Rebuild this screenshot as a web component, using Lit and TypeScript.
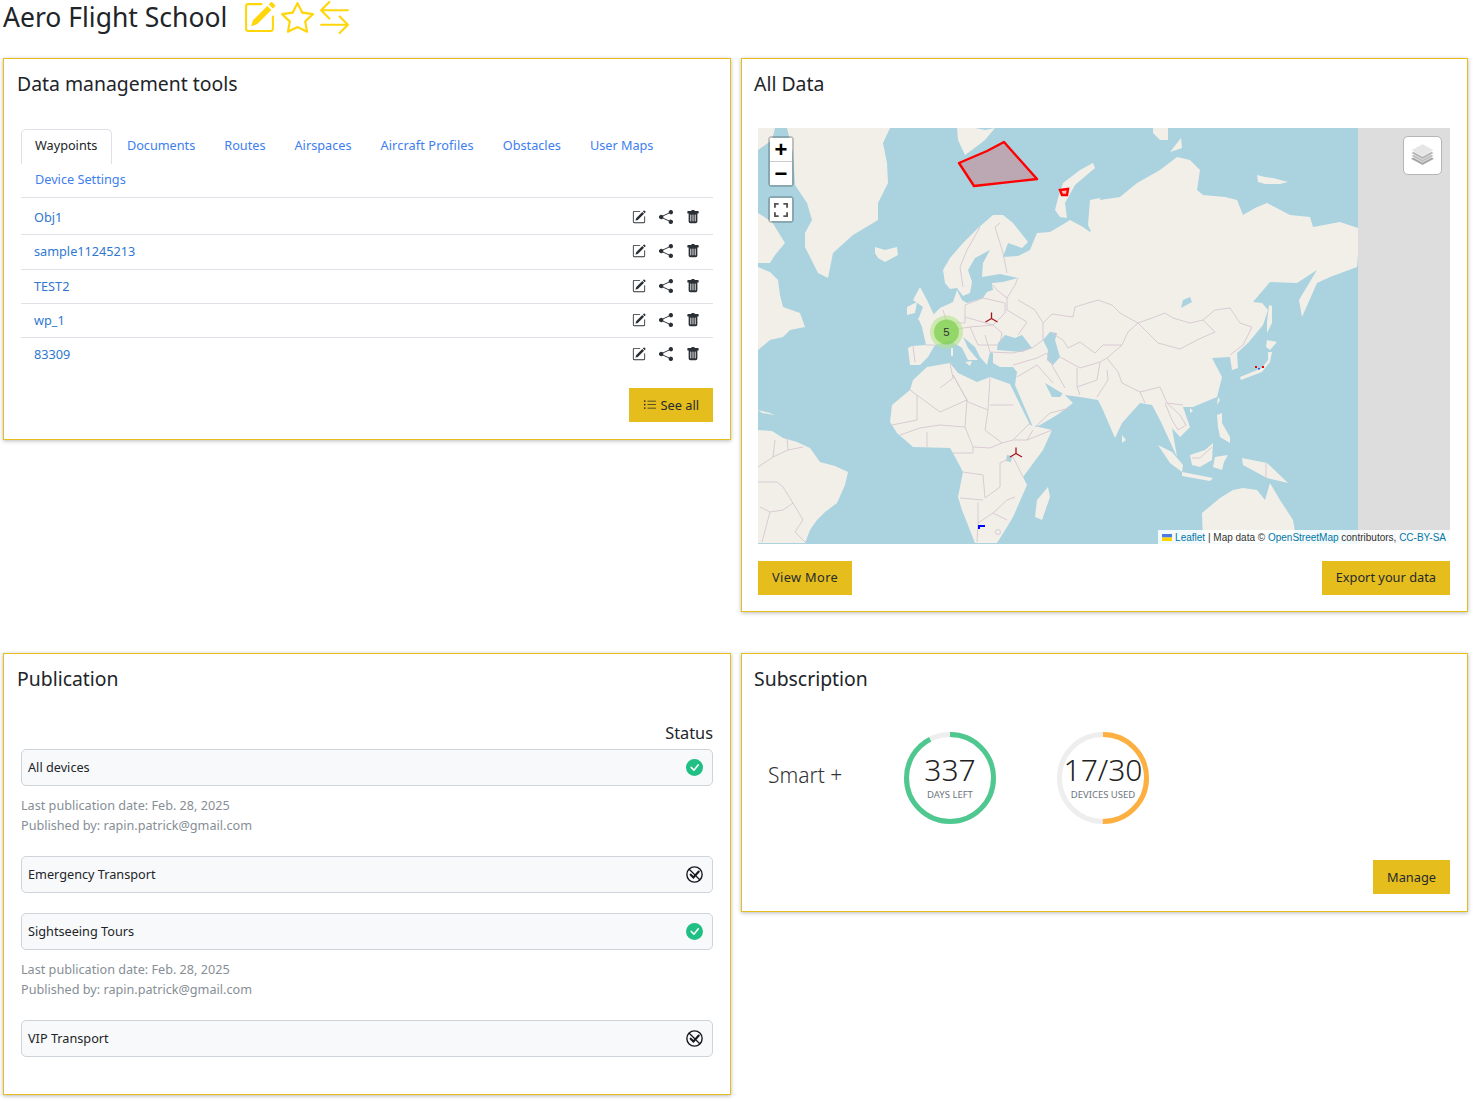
import { LitElement, css, html, svg } from "lit";
import { customElement } from "lit/decorators.js";

const LAND = [
  // greenland
  "787,128 890,128 883,143 887,163 888,183 878,203 878,220 853,235 833,253 828,278 818,273 805,247 805,233 812,220 807,203 795,185 793,153",
  // canada, arctic and east coast
  "758,128 775,128 772,140 758,150",
  "758,213 772,222 785,243 775,255 770,263 758,263",
  "758,267 770,272 778,280 780,295 783,307 800,313 805,327 790,330 783,337 770,340 758,350",
  // south america
  "758,430 772,431 783,438 797,442 810,448 820,462 835,466 848,472 845,485 837,503 825,512 817,520 810,530 805,543 758,543",
  "758,410 770,413 775,415 762,413",
  // iceland
  "875,247 885,250 897,247 898,255 885,262 878,258 875,253",
  // svalbard, novaya zemlya, arctic russia
  "957,128 975,128 985,130 995,128 985,140 972,150 965,155 958,140",
  "1093,163 1095,168 1075,185 1065,203 1067,218 1060,217 1055,210 1058,198 1063,183 1080,170",
  "1090,200 1100,198 1103,220 1095,240 1088,225",
  "1153,128 1168,128 1168,140 1160,140 1153,133",
  "1170,152 1181,138 1182,148",
  "1257,175 1265,177 1273,178 1288,182 1280,184 1265,184 1258,182",
  // eurasia
  "945,283 943,270 950,258 963,243 978,228 993,215 1003,215 1013,223 1028,242 1022,248 1008,243 1003,257 1018,256 1030,250 1037,233 1050,232 1062,225 1070,220 1083,227 1090,232 1098,222 1100,200 1120,197 1137,183 1160,170 1177,157 1190,160 1200,170 1197,190 1203,195 1225,197 1237,200 1243,215 1255,208 1267,203 1290,215 1310,217 1313,227 1340,222 1358,228 1358,255 1357,267 1330,277 1317,283 1302,317 1299,300 1317,270 1297,283 1270,282 1253,302 1262,303 1268,310 1263,325 1248,343 1237,353 1238,368 1232,370 1230,357 1212,358 1222,377 1217,397 1193,407 1183,407 1190,427 1180,437 1172,428 1177,457 1167,435 1160,420 1152,405 1140,403 1122,423 1115,438 1103,410 1098,400 1080,397 1065,395 1045,383 1052,397 1060,397 1063,393 1073,403 1057,415 1040,425 1033,427 1015,385 1017,372 1013,367 1000,367 993,363 993,353 990,352 987,365 980,357 975,347 963,337 968,348 978,360 975,360 968,360 962,348 950,340 943,343 935,345 932,350 928,357 920,365 910,365 908,348 912,346 926,345 922,327 918,318 933,315 940,308 953,302 957,290 962,300 967,303 983,298 987,292 993,290 992,283 1003,282 1018,278 1000,274 982,277 983,263 990,250 975,258 968,270 972,282 970,293 963,296 957,288 950,289",
  // africa
  "927,367 950,363 958,373 977,382 990,377 1010,384 1030,425 1052,430 1043,450 1023,477 1027,485 1013,517 1007,527 997,543 975,543 962,510 958,497 963,472 953,453 950,448 913,447 897,433 890,422 892,405 910,390 913,380",
  "1048,487 1050,497 1042,520 1035,517 1037,500",
  // uk, mediterranean islands
  "920,287 927,300 935,317 918,320 923,307 913,300",
  "907,307 917,302 915,313 907,315",
  "951,348 953,348 953,356 951,356",
  "965,362 972,361 970,366",
  // japan and east asia islands
  "1268,352 1268,360 1262,368 1240,377 1241,380 1262,372 1270,362 1272,352",
  "1267,340 1277,342 1270,350 1266,347",
  "1269,305 1272,306 1272,323 1267,333 1267,322",
  "1218,397 1220,400 1217,405",
  "1190,408 1193,411 1190,413",
  "1122,435 1126,440 1122,443",
  // south east asia
  "1158,445 1172,452 1183,465 1182,472 1170,463",
  "1182,472 1213,478 1210,481 1182,476",
  "1190,455 1205,450 1213,443 1212,460 1200,467 1192,465",
  "1215,457 1228,455 1224,462 1222,470 1213,467",
  "1217,415 1222,413 1222,423 1230,437 1230,443 1220,437 1218,427",
  "1242,458 1267,463 1288,483 1267,478 1243,465",
  // australia
  "1202,513 1220,498 1233,490 1243,488 1257,490 1265,500 1270,483 1280,500 1293,520 1297,543 1203,543",
];

const WATER = [
  // black sea, caspian
  "998,343 1005,335 1015,338 1022,335 1032,348 1022,352 997,350",
  "1043,340 1050,332 1057,333 1055,340 1060,357 1053,365 1047,360 1048,350",
  // lakes
  "1007,455 1012,456 1011,462 1006,461",
  "1183,300 1190,297 1192,302 1181,308",
];

const BORDERS = [
  // north and west africa
  "950,363 953,378 940,388",
  "910,390 940,412 967,400 953,375",
  "953,375 968,402 988,410 990,378",
  "990,405 1013,405",
  "988,410 985,430 1002,443 1013,440 1030,423",
  "967,400 965,427 973,447 990,448 1002,443",
  "892,425 917,420 917,395",
  "900,435 920,428 940,425 965,427",
  "927,447 927,432",
  // central and southern africa
  "953,453 973,453 973,447",
  "963,472 983,475 985,498 1000,487 1000,463 1013,457 1023,477",
  "960,498 983,500",
  "978,502 978,523 977,542",
  "993,513 1007,500 1015,497",
  "978,523 993,513 1007,520",
  "1027,440 1052,430",
  "1013,440 1027,440 1033,430",
  // south america
  "758,467 773,457 775,440",
  "787,438 788,450 803,447",
  "773,457 788,450",
  "758,482 777,482 783,487 793,503 803,520 795,532 805,542",
  "760,507 770,512 783,510 793,503",
  "770,512 762,542",
  // europe
  "913,346 915,362",
  "926,345 935,345",
  "943,310 947,323 965,323 965,305",
  "965,305 983,298 1005,303 1005,313 993,325 965,317",
  "950,330 970,327 993,325 1002,333 1000,343",
  "970,327 978,345 998,345",
  "985,335 990,352",
  "993,285 997,290 1007,298 1007,310 1027,322 1018,335",
  "1018,278 1015,285 1007,298",
  "980,227 967,250 960,267 963,287",
  "1000,223 995,227 1003,253 1007,273",
  // turkey, middle east
  "990,352 1013,353 1032,348",
  "1013,365 1037,358 1047,353",
  "1047,353 1053,367 1065,388",
  "1017,377 1037,365 1053,383",
  "1035,427 1050,413 1070,408",
  "1032,348 1043,340",
  // central asia
  "1043,323 1052,314 1073,317 1075,307 1098,300 1112,305 1120,313 1138,323",
  "1018,300 1035,310 1043,323 1043,340",
  "1138,323 1128,332 1122,345 1103,345 1095,353 1080,342 1068,348 1063,340 1050,332",
  "1138,323 1152,318 1165,313 1173,318 1190,323 1203,320 1215,332 1197,340 1180,349 1158,343 1147,332 1138,323",
  "1203,320 1215,310 1230,308 1240,323 1252,327 1243,345 1230,355",
  "1122,345 1107,358 1118,372 1122,383 1140,392 1160,387 1167,403 1183,405",
  "1060,357 1080,368 1100,362 1107,358",
  "1077,368 1077,387 1080,395",
  "1100,362 1097,380 1077,387",
  "1107,370 1108,380 1097,397",
  "1165,403 1172,420 1178,430",
  "1167,403 1180,415 1186,425 1178,430",
  "1140,392 1145,403",
  // new guinea, borneo
  "1266,463 1266,479",
  "1192,458 1200,458 1212,447",
];

const cardIcon = (paths: unknown, cls: string) => html`<svg class=${cls} viewBox="0 0 16 16" fill="currentColor">${paths}</svg>`;

const pencil = svg`<path d="M15.502 1.94a.5.5 0 0 1 0 .706L14.459 3.69l-2-2L13.502.646a.5.5 0 0 1 .707 0l1.293 1.293zm-1.75 2.456-2-2L4.939 9.21a.5.5 0 0 0-.121.196l-.805 2.414a.25.25 0 0 0 .316.316l2.414-.805a.5.5 0 0 0 .196-.12l6.813-6.814z"/><path fill-rule="evenodd" d="M1 13.5A1.5 1.5 0 0 0 2.5 15h11a1.5 1.5 0 0 0 1.5-1.5v-6a.5.5 0 0 0-1 0v6a.5.5 0 0 1-.5.5h-11a.5.5 0 0 1-.5-.5v-11a.5.5 0 0 1 .5-.5H9a.5.5 0 0 0 0-1H2.5A1.5 1.5 0 0 0 1 2.5v11z"/>`;
const star = svg`<path d="M2.866 14.85c-.078.444.36.791.746.593l4.39-2.256 4.389 2.256c.386.198.824-.149.746-.592l-.83-4.73 3.522-3.356c.33-.314.16-.888-.282-.95l-4.898-.696L8.465.792a.513.513 0 0 0-.927 0L5.354 5.12l-4.898.696c-.441.062-.612.636-.283.95l3.523 3.356-.83 4.73zm4.905-2.767-3.686 1.894.694-3.957a.565.565 0 0 0-.163-.505L1.71 6.745l4.052-.576a.525.525 0 0 0 .393-.288L8 2.223l1.847 3.658a.525.525 0 0 0 .393.288l4.052.575-2.906 2.77a.565.565 0 0 0-.163.506l.694 3.957-3.686-1.894a.503.503 0 0 0-.461 0z"/>`;
const arrows = svg`<path fill-rule="evenodd" d="M1 11.5a.5.5 0 0 0 .5.5h11.793l-3.147 3.146a.5.5 0 0 0 .708.708l4-4a.5.5 0 0 0 0-.708l-4-4a.5.5 0 0 0-.708.708L13.293 11H1.5a.5.5 0 0 0-.5.5zm14-7a.5.5 0 0 1-.5.5H2.707l3.147 3.146a.5.5 0 1 1-.708.708l-4-4a.5.5 0 0 1 0-.708l4-4a.5.5 0 1 1 .708.708L2.707 4H14.5a.5.5 0 0 1 .5.5z"/>`;
const share = svg`<path d="M11 2.5a2.5 2.5 0 1 1 .603 1.628l-6.718 3.12a2.499 2.499 0 0 1 0 1.504l6.718 3.12a2.5 2.5 0 1 1-.488.876l-6.718-3.12a2.5 2.5 0 1 1 0-3.256l6.718-3.12A2.5 2.5 0 0 1 11 2.5z"/>`;
const trash = svg`<path d="M2.5 1a1 1 0 0 0-1 1v1a1 1 0 0 0 1 1H3v9a2 2 0 0 0 2 2h6a2 2 0 0 0 2-2V4h.5a1 1 0 0 0 1-1V2a1 1 0 0 0-1-1H10a1 1 0 0 0-1-1H7a1 1 0 0 0-1 1H2.5zm3 4a.5.5 0 0 1 .5.5v7a.5.5 0 0 1-1 0v-7a.5.5 0 0 1 .5-.5zM8 5a.5.5 0 0 1 .5.5v7a.5.5 0 0 1-1 0v-7A.5.5 0 0 1 8 5zm3 .5v7a.5.5 0 0 1-1 0v-7a.5.5 0 0 1 1 0z"/>`;
const list = svg`<path fill-rule="evenodd" d="M5 11.5a.5.5 0 0 1 .5-.5h9a.5.5 0 0 1 0 1h-9a.5.5 0 0 1-.5-.5zm0-4a.5.5 0 0 1 .5-.5h9a.5.5 0 0 1 0 1h-9a.5.5 0 0 1-.5-.5zm0-4a.5.5 0 0 1 .5-.5h9a.5.5 0 0 1 0 1h-9a.5.5 0 0 1-.5-.5zm-3 1a1 1 0 1 0 0-2 1 1 0 0 0 0 2zm0 4a1 1 0 1 0 0-2 1 1 0 0 0 0 2zm0 4a1 1 0 1 0 0-2 1 1 0 0 0 0 2z"/>`;
const checkFill = svg`<path d="M16 8A8 8 0 1 1 0 8a8 8 0 0 1 16 0zm-3.97-3.03a.75.75 0 0 0-1.08.022L7.477 9.417 5.384 7.323a.75.75 0 0 0-1.06 1.06L6.97 11.03a.75.75 0 0 0 1.079-.02l3.992-4.99a.75.75 0 0 0-.01-1.05z"/>`;
const unpublished = svg`<circle cx="8" cy="8" r="7.2" fill="none" stroke="currentColor" stroke-width="1.3"/><path d="M2.8 2.8 13.2 13.2" stroke="currentColor" stroke-width="1.2"/><path d="M4.4 8.2 7 10.8 12 5.2" fill="none" stroke="currentColor" stroke-width="2" stroke-linecap="round"/>`;

const blade = (x: number, y: number) => svg`<g transform="translate(${x} ${y})" fill="none" stroke="#a3151c" stroke-width="1.3"><path d="M0 0V-6M0 0 6 3.5M0 0-6 3.5"/></g>`;

@customElement("app-root")
export class AppRoot extends LitElement {
  static styles = css`
    :host {
      display: block;
      font-family: "Noto Sans", "Open Sans", sans-serif;
      color: #212529;
      font-size: 13px;
      background: #fff;
      height: 1103px;
      overflow: hidden;
    }
    .top {
      height: 58px;
      display: flex;
      align-items: flex-start;
      padding-left: 3px;
    }
    h1 {
      margin: 0;
      font-size: 26.5px;
      font-weight: 400;
      line-height: 34px;
      width: 240px;
    }
    .top-icons {
      display: flex;
      color: #ffd60a;
      gap: 4.5px;
    }
    .top-icons svg {
      width: 33px;
      height: 33px;
      margin-top: 1px;
    }
    .grid {
      display: grid;
      grid-template-columns: 728px 727px;
      column-gap: 10px;
      row-gap: 41px;
      padding-left: 3px;
      align-items: start;
    }
    .card {
      box-sizing: border-box;
      border: 1px solid #e5bd1d;
      box-shadow: 0 1px 4px rgba(0, 0, 0, 0.28);
      padding: 12px 17px 17px 13px;
      background: #fff;
    }
    .card h2 {
      margin: 0;
      font-size: 19.4px;
      font-weight: 400;
      line-height: 26px;
    }
    .map-card h2,
    .sub h2 {
      margin-left: -1px;
    }
    .data {
      height: 382px;
    }
    .body {
      margin: 32px 0 0 4px;
    }
    .tabs {
      display: flex;
      flex-wrap: wrap;
      border-bottom: 1px solid #dee2e6;
    }
    .tab {
      height: 34px;
      line-height: 32px;
      padding: 0 14px;
      color: #3d7ef0;
      font-size: 12.7px;
      box-sizing: border-box;
      margin-right: 1px;
    }
    .tab.active {
      color: #212529;
      border: 1px solid #dee2e6;
      border-bottom: none;
      border-radius: 5px 5px 0 0;
      line-height: 30px;
      padding: 0 13.5px 0 13px;
      background: #fff;
      height: 35px;
      margin-bottom: -1px;
    }
    .tab.long {
      letter-spacing: 0.12px;
    }
    .tab-break {
      flex-basis: 100%;
      height: 0;
    }
    .row {
      display: flex;
      align-items: center;
      height: 34px;
      border-bottom: 1px solid #dee2e6;
      padding: 0 13px 1px 13px;
      box-sizing: border-box;
      color: #2f78d0;
      font-size: 12.7px;
    }
    .row.first {
      height: 37px;
      padding-top: 2px;
    }
    .row.second {
      height: 35px;
      padding-bottom: 2px;
    }
    .row.last {
      border-bottom: none;
      padding-bottom: 2px;
    }
    .row span {
      flex: 1;
    }
    .row svg {
      width: 14px;
      height: 14px;
      color: #2b3036;
      margin-left: 13px;
    }
    .row svg.ed {
      margin-left: 0;
    }
    .actions {
      display: flex;
      justify-content: space-between;
    }
    .actions.end {
      justify-content: flex-end;
    }
    .btn {
      box-sizing: border-box;
      background: #e5bd1d;
      color: #262a2e;
      height: 34px;
      padding: 0 14px 2px;
      font-size: 12.8px;
      display: flex;
      align-items: center;
      gap: 3px;
    }
    .btn.wide {
      letter-spacing: 0.35px;
    }
    .btn.low {
      padding-bottom: 0;
    }
    .btn svg {
      width: 14px;
      height: 14px;
    }
    .see {
      margin-top: 16px;
    }
    .map-card {
      height: 554px;
    }
    .map {
      position: relative;
      margin: 31px 0 0 3px;
      width: 692px;
      height: 416px;
      overflow: hidden;
      background: #ddd;
      font-family: "Liberation Sans", Arial, sans-serif;
    }
    .map > svg {
      display: block;
      width: 692px;
      height: 416px;
    }
    .ctl {
      position: absolute;
      left: 10px;
      border: 2px solid rgba(0, 0, 0, 0.2);
      border-radius: 4px;
      background-clip: padding-box;
      width: 22px;
    }
    .ctl div {
      background: #fff;
      height: 23px;
      display: flex;
      align-items: center;
      justify-content: center;
      color: #000;
      font: 700 22px "Liberation Sans", sans-serif;
    }
    .ctl div + div {
      border-top: 1px solid #ccc;
    }
    .ctl svg {
      width: 14px;
      height: 14px;
    }
    .ctl-zoom {
      top: 8px;
    }
    .ctl-full {
      top: 68px;
    }
    .layers {
      position: absolute;
      right: 8px;
      top: 8px;
      box-sizing: border-box;
      width: 39px;
      height: 39px;
      background: #fff;
      border: 1px solid #b5b5b5;
      border-radius: 5px;
      display: flex;
      align-items: center;
      justify-content: center;
    }
    .layers svg {
      width: 25px;
      height: 25px;
    }
    .attr {
      position: absolute;
      right: 0;
      bottom: 0;
      height: 14px;
      line-height: 15px;
      padding: 0 4px;
      background: rgba(255, 255, 255, 0.85);
      color: #333;
      font-size: 10px;
      white-space: nowrap;
      display: flex;
      align-items: center;
      gap: 3px;
    }
    .attr b {
      font-weight: 400;
      color: #0078a8;
    }
    .attr svg {
      width: 10px;
      height: 7px;
    }
    .map-actions {
      margin: 17px 0 0 3px;
    }
    .status {
      margin: 31px 0 0;
      text-align: right;
      font-size: 16.3px;
      line-height: 21px;
      padding-bottom: 5px;
    }
    .pub {
      margin-left: 4px;
      height: 400px;
    }
    .pub-card {
      height: 442px;
    }
    .group {
      box-sizing: border-box;
      height: 37px;
      display: flex;
      align-items: center;
      justify-content: space-between;
      background: #f8f9fa;
      border: 1px solid #ced4da;
      border-radius: 5px;
      padding: 0 9px 2px 6px;
      color: #212529;
      font-size: 12.7px;
    }
    .group svg {
      width: 17px;
      height: 17px;
      margin-top: 2px;
    }
    .group .ok {
      color: #20bf83;
    }
    .group .no {
      color: #16191c;
    }
    .meta {
      color: #868e96;
      font-size: 12.65px;
      line-height: 20px;
      margin-top: 9px;
      padding-bottom: 1px;
    }
    .gap-a {
      margin-top: 20px;
    }
    .sub {
      height: 259px;
    }
    .sub-row {
      display: flex;
      margin: 40px 0 0 13px;
      height: 92px;
      align-items: center;
    }
    .plan {
      font-size: 21px;
      font-weight: 300;
      width: 136px;
      margin-top: -6px;
      color: #333;
    }
    .ring {
      position: relative;
      width: 92px;
      height: 92px;
      margin-right: 61px;
      text-align: center;
    }
    .ring svg {
      display: block;
      width: 92px;
      height: 92px;
    }
    .ring .val {
      position: absolute;
      left: -5px;
      right: -5px;
      top: 21px;
      font-size: 30px;
      line-height: 34px;
      font-weight: 300;
      color: #222;
    }
    .ring .lab {
      position: absolute;
      left: -5px;
      right: -5px;
      top: 56px;
      font-size: 9.5px;
      line-height: 13px;
      color: #6c757d;
    }
    .sub .actions {
      margin-top: 36px;
    }
  `;

  private ring(color: string, pct: number, val: string, lab: string) {
    const c = 2 * Math.PI * 43.5;
    return html`<div class="ring">
      <svg viewBox="0 0 92 92">
        <circle cx="46" cy="46" r="43.5" fill="none" stroke="#eee" stroke-width="5" />
        <circle
          cx="46"
          cy="46"
          r="43.5"
          fill="none"
          stroke=${color}
          stroke-width="5"
          stroke-dasharray="${(c * pct) / 100} ${c}"
          transform="rotate(-90 46 46)"
        />
      </svg>
      <div class="val">${val}</div>
      <div class="lab">${lab}</div>
    </div>`;
  }

  private mapSvg() {
    return html`<svg viewBox="758 128 692 416">
      <rect x="758" y="128" width="600" height="416" fill="#aad3df" />
      <g fill="#f2efe9">${LAND.map((p) => svg`<polygon points=${p} />`)}</g>
      <g fill="#aad3df">${WATER.map((p) => svg`<polygon points=${p} />`)}</g>
      <g fill="none" stroke="#d6c6d0" stroke-width="0.9">${BORDERS.map((p) => svg`<polyline points=${p} />`)}</g>
      <circle cx="998" cy="532" r="2.5" fill="none" stroke="#d6c6d0" stroke-width="0.9" />
      <polygon points="959,163 987,151 1004,142 1037,179 974,186" fill="#f00" fill-opacity="0.2" stroke="#f00" stroke-width="2.4" stroke-linejoin="round" />
      <polygon points="1060,190 1068,189 1067,195 1062,195" fill="#f00" fill-opacity="0.2" stroke="#f00" stroke-width="2.4" />
      ${blade(991.5, 318.5)} ${blade(1016, 453.5)}
      <circle cx="946.5" cy="332" r="16.5" fill="#b5e28c" fill-opacity="0.6" />
      <circle cx="946.5" cy="332" r="12.5" fill="#6ecc39" fill-opacity="0.6" />
      <text x="946.5" y="336" text-anchor="middle" font-size="11.5" fill="#333" font-family="Liberation Sans">5</text>
      <rect x="1255" y="366" width="2" height="2" fill="#e00" />
      <rect x="1262" y="366" width="2" height="2" fill="#e00" />
      <rect x="1258" y="368" width="2" height="1.5" fill="#36c" />
      <path d="M979 529V526H985" fill="none" stroke="#00f" stroke-width="2" />
    </svg>`;
  }

  render() {
    const tabs = ["Documents", "Routes", "Airspaces", "Aircraft Profiles", "Obstacles", "User Maps"];
    const rows = ["Obj1", "sample11245213", "TEST2", "wp_1", "83309"];
    return html`
      <div class="top">
        <h1>Aero Flight School</h1>
        <div class="top-icons">${cardIcon(pencil, "")}${cardIcon(star, "")}${cardIcon(arrows, "")}</div>
      </div>
      <div class="grid">
        <section class="card data">
          <h2>Data management tools</h2>
          <div class="body">
            <div class="tabs">
              <div class="tab active">Waypoints</div>
              ${tabs.map((t) => html`<div class="tab ${t === "Aircraft Profiles" ? "long" : ""}">${t}</div>`)}
              <div class="tab-break"></div>
              <div class="tab">Device Settings</div>
            </div>
            ${rows.map(
              (r, i) => html`<div class="row ${i === 0 ? "first" : ""} ${i === 1 ? "second" : ""} ${i === rows.length - 1 ? "last" : ""}">
                <span>${r}</span>${cardIcon(pencil, "ed")}${cardIcon(share, "")}${cardIcon(trash, "")}
              </div>`
            )}
            <div class="actions end see"><div class="btn low">${cardIcon(list, "")}See all</div></div>
          </div>
        </section>

        <section class="card map-card">
          <h2>All Data</h2>
          <div class="map">
            ${this.mapSvg()}
            <div class="ctl ctl-zoom">
              <div>+</div>
              <div>−</div>
            </div>
            <div class="ctl ctl-full">
              <div>
                <svg viewBox="0 0 15 15" fill="none" stroke="#555" stroke-width="2">
                  <path d="M1 5V1H5M10 1H14V5M14 10V14H10M5 14H1V10" />
                </svg>
              </div>
            </div>
            <div class="layers">
              <svg viewBox="0 0 26 26">
                <path d="M13 10 25 16.500 13 23 1 16.500Z" fill="#a8a8a8" />
                <path d="M13 7 25 13.500 13 20 1 13.500Z" fill="#bdbdbd" stroke="#fff" stroke-width="0.6" />
                <path d="M13 4 25 10.500 13 17 1 10.500Z" fill="#b3b3b3" stroke="#fff" stroke-width="0.6" />
                <path d="M13 1 25 7.500 13 14 1 7.500Z" fill="#e6e6e6" stroke="#fff" stroke-width="0.6" />
              </svg>
            </div>
            <div class="attr">
              <svg viewBox="0 0 10 7"><rect width="10" height="3.500" fill="#4c7be1" /><rect y="3.500" width="10" height="3.500" fill="#ffd500" /></svg>
              <span><b>Leaflet</b> | Map data © <b>OpenStreetMap</b> contributors, <b>CC-BY-SA</b></span>
            </div>
          </div>
          <div class="actions map-actions">
            <div class="btn wide">View More</div>
            <div class="btn">Export your data</div>
          </div>
        </section>

        <section class="card pub-card">
          <h2>Publication</h2>
          <div class="pub">
            <div class="status">Status</div>
            <div class="group">All devices ${cardIcon(checkFill, "ok")}</div>
            <div class="meta">Last publication date: Feb. 28, 2025<br />Published by: rapin.patrick@gmail.com</div>
            <div class="group gap-a">Emergency Transport ${cardIcon(unpublished, "no")}</div>
            <div class="group gap-a">Sightseeing Tours ${cardIcon(checkFill, "ok")}</div>
            <div class="meta">Last publication date: Feb. 28, 2025<br />Published by: rapin.patrick@gmail.com</div>
            <div class="group gap-a">VIP Transport ${cardIcon(unpublished, "no")}</div>
          </div>
        </section>

        <section class="card sub">
          <h2>Subscription</h2>
          <div class="sub-row">
            <div class="plan">Smart +</div>
            ${this.ring("#4fc88f", 92.3, "337", "DAYS LEFT")} ${this.ring("#fdb03f", 50, "17/30", "DEVICES USED")}
          </div>
          <div class="actions end"><div class="btn low">Manage</div></div>
        </section>
      </div>
    `;
  }
}
